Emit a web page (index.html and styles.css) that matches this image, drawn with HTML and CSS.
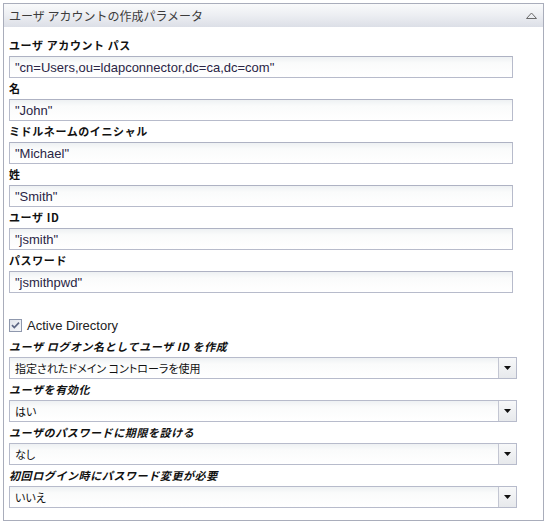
FILE: index.html
```html
<!DOCTYPE html>
<html lang="ja">
<head>
<meta charset="utf-8">
<title>ユーザ アカウントの作成パラメータ</title>
<link rel="stylesheet" href="styles.css">
</head>
<body>
<div class="panel">
  <div class="panel-header">
    <span class="panel-title">ユーザ アカウントの作成パラメータ</span>
    <svg class="collapse" width="11" height="7" viewBox="0 0 11 7"><path d="M0.5 6.5 L5.5 1 L10.5 6.5 Z" fill="none" stroke="#6a6a6a" stroke-width="1"/></svg>
  </div>
  <div class="panel-body">
    <div class="field">
      <div class="label">ユーザ アカウント パス</div>
      <input class="text" type="text" value='"cn=Users,ou=ldapconnector,dc=ca,dc=com"'>
    </div>
    <div class="field">
      <div class="label">名</div>
      <input class="text" type="text" value='"John"'>
    </div>
    <div class="field">
      <div class="label">ミドルネームのイニシャル</div>
      <input class="text" type="text" value='"Michael"'>
    </div>
    <div class="field">
      <div class="label">姓</div>
      <input class="text" type="text" value='"Smith"'>
    </div>
    <div class="field">
      <div class="label">ユーザ ID</div>
      <input class="text" type="text" value='"jsmith"'>
    </div>
    <div class="field">
      <div class="label">パスワード</div>
      <input class="text" type="text" value='"jsmithpwd"'>
    </div>

    <div class="check-row">
      <svg class="checkbox" width="13" height="13" viewBox="0 0 13 13">
        <defs><linearGradient id="cb" x1="0" y1="0" x2="1" y2="1"><stop offset="0" stop-color="#dfe3ea"/><stop offset="1" stop-color="#f8f9fb"/></linearGradient></defs>
        <rect x="0.5" y="0.5" width="12" height="12" fill="url(#cb)" stroke="#8f98ad"/>
        <path d="M3 6.2 L5.3 8.6 L10 3.6" fill="none" stroke="#5d6784" stroke-width="1.7"/>
      </svg>
      <span class="check-label">Active Directory</span>
    </div>

    <div class="field">
      <div class="label italic">ユーザ ログオン名としてユーザ ID を作成</div>
      <div class="select"><span class="select-value">指定されたドメイン コントローラを使用</span><span class="select-btn"><svg width="7" height="4" viewBox="0 0 7 4"><path d="M0 0 H7 L3.5 4 Z" fill="#111"/></svg></span></div>
    </div>
    <div class="field">
      <div class="label italic">ユーザを有効化</div>
      <div class="select"><span class="select-value">はい</span><span class="select-btn"><svg width="7" height="4" viewBox="0 0 7 4"><path d="M0 0 H7 L3.5 4 Z" fill="#111"/></svg></span></div>
    </div>
    <div class="field">
      <div class="label italic">ユーザのパスワードに期限を設ける</div>
      <div class="select"><span class="select-value">なし</span><span class="select-btn"><svg width="7" height="4" viewBox="0 0 7 4"><path d="M0 0 H7 L3.5 4 Z" fill="#111"/></svg></span></div>
    </div>
    <div class="field">
      <div class="label italic">初回ログイン時にパスワード変更が必要</div>
      <div class="select"><span class="select-value">いいえ</span><span class="select-btn"><svg width="7" height="4" viewBox="0 0 7 4"><path d="M0 0 H7 L3.5 4 Z" fill="#111"/></svg></span></div>
    </div>
  </div>
</div>
</body>
</html>
```

FILE: styles.css
```css
html, body {
  margin: 0;
  padding: 0;
  background: #ffffff;
}

body {
  font-family: "Liberation Sans", "Noto Sans CJK JP", sans-serif;
  color: #222;
}

.panel {
  box-sizing: border-box;
  margin: 3px 0 0 3px;
  width: 541px;
  height: 518px;
  border: 1px solid #a9adbb;
  background: #fff;
}

.panel-header {
  height: 23px;
  display: flex;
  align-items: center;
  justify-content: space-between;
  padding: 0 6px 0 5px;
  background: linear-gradient(to bottom, #f9fafb 0%, #eceef2 50%, #dcdfe7 100%);
}

.panel-title {
  font-family: "Noto Sans CJK JP", sans-serif;
  font-size: 12px;
  color: #3c3c3c;
}

.collapse {
  display: block;
  margin-top: -1px;
}

.panel-body {
  padding: 8px 0 0 5px;
}

.field {
  display: flex;
  flex-direction: column;
}

.label {
  font-family: "Noto Sans CJK JP", sans-serif;
  font-weight: bold;
  font-size: 11px;
  line-height: 21px;
  height: 21px;
  letter-spacing: 0.6px;
  color: #111;
}

.label.italic {
  font-style: italic;
}

.text {
  box-sizing: border-box;
  width: 504px;
  height: 22px;
  margin: 0;
  padding: 0 5px;
  border: 1px solid #b7bbcb;
  border-top-color: #aeb2c3;
  background: linear-gradient(to bottom, #eef1f3 0px, #fafbfb 6px, #ffffff 100%);
  font-family: "Liberation Sans", sans-serif;
  font-size: 13px;
  color: #2a2545;
  outline: none;
}

.check-row {
  display: flex;
  align-items: center;
  height: 22px;
  margin-top: 21px;
}

.checkbox {
  display: block;
}

.check-label {
  font-family: "Liberation Sans", sans-serif;
  font-size: 13px;
  color: #222;
  margin-left: 5px;
}

.select {
  box-sizing: border-box;
  width: 508px;
  height: 22px;
  display: flex;
  border: 1px solid #b7bbcb;
  background: linear-gradient(to bottom, #eef1f3 0px, #fafbfb 6px, #ffffff 100%);
}

.select-value {
  flex: 1;
  padding-left: 5px;
  font-family: "Noto Sans CJK JP", sans-serif;
  font-size: 11px;
  font-feature-settings: "palt";
  line-height: 20px;
  color: #111;
}

.select-btn {
  width: 17px;
  border-left: 1px solid #c3c6d2;
  background: linear-gradient(to bottom, #f7f8f9, #e7e9ec);
  display: flex;
  align-items: center;
  justify-content: center;
}
```
